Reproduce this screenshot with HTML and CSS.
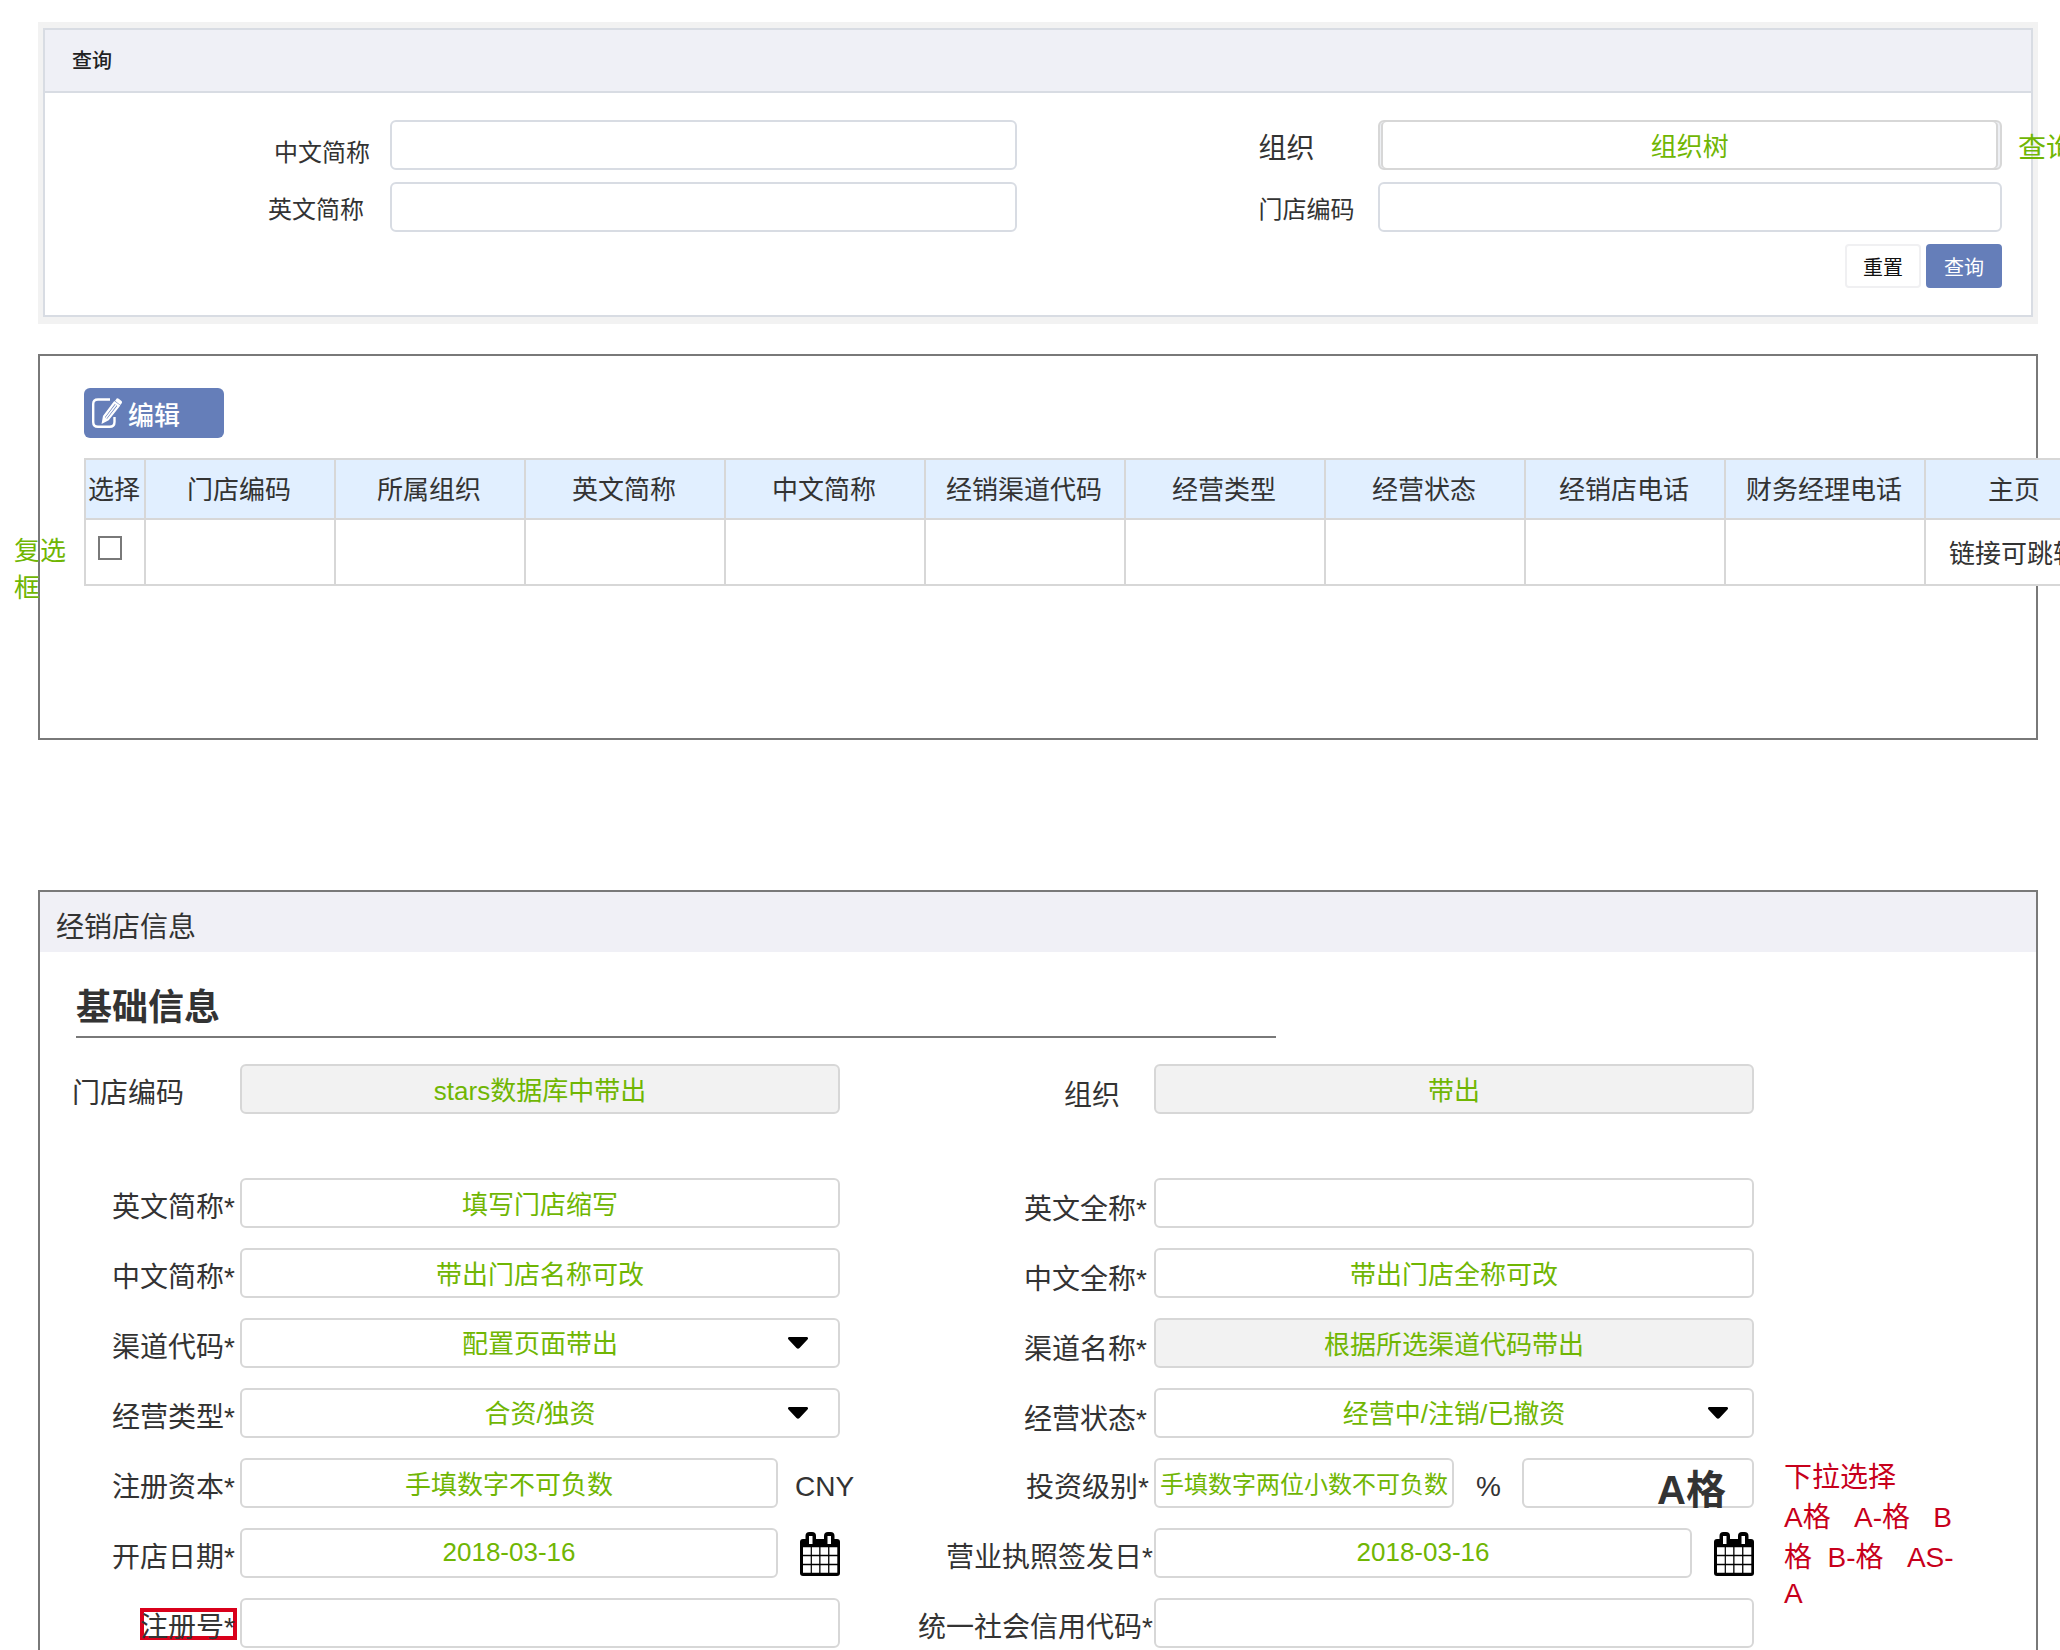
FILE: index.html
```html
<!DOCTYPE html>
<html lang="zh-CN">
<head>
<meta charset="utf-8">
<title>经销店信息</title>
<link rel="stylesheet" href="styles.css">
</head>
<body>
<svg class="defs" aria-hidden="true">
  <symbol id="calendar" viewBox="0 0 40 44">
    <path d="M3 7H37Q40 7 40 10V41Q40 44 37 44H3Q0 44 0 41V10Q0 7 3 7Z"/>
    <rect x="5.5" width="10.5" height="14" rx="4"/><rect x="24" width="10.5" height="14" rx="4"/>
    <path fill="#fff" d="M9 4h3.5v8H9zM27.5 4H31v8h-3.500zM3 15.300h7.700v7.500H3zM11.900 15.300h7.300v7.500h-7.300zM20.500 15.300h7.600v7.500h-7.600zM29.400 15.300h7.900v7.500h-7.900zM3 24.200h7.700v7.500H3zM11.900 24.200h7.300v7.500h-7.300zM20.500 24.200h7.600v7.500h-7.600zM29.400 24.200h7.900v7.500h-7.900zM3 33.200h7.700v7.500H3zM11.900 33.200h7.300v7.500h-7.300zM20.500 33.200h7.600v7.500h-7.600zM29.400 33.200h7.900v7.500h-7.900z"/>
  </symbol>
  <symbol id="caret" viewBox="0 0 20 12"><path d="M1 0H19Q21 1 19.500 2.500L11.500 11Q10 12.600 8.500 11L.5 2.500Q-1 1 1 0Z"/></symbol>
</svg>

<section class="search">
  <div class="search-box">
    <h2 class="search-title">查询</h2>
    <form class="search-form">
      <label class="search-label near" for="q-cn">中文简称</label>
      <input class="field search-field" id="q-cn" type="text">
      <label class="search-label start large" for="q-org">组织</label>
      <div class="control">
        <input class="field search-field tree" id="q-org" type="text" value="组织树">
        <span class="note side-note">查询</span>
      </div>
      <label class="search-label far" for="q-en">英文简称</label>
      <input class="field search-field" id="q-en" type="text">
      <label class="search-label start" for="q-code">门店编码</label>
      <input class="field search-field" id="q-code" type="text">
      <div class="search-actions">
        <button class="btn" type="reset">重置</button>
        <button class="btn primary" type="button">查询</button>
      </div>
    </form>
  </div>
</section>

<section class="results">
  <button class="edit" type="button">
    <svg class="edit-icon" viewBox="0 0 30 30" aria-hidden="true">
      <path d="M18 1.500H6Q1.200 1.500 1.200 6V24Q1.200 28.800 6 28.800H17.500Q22.500 28.800 22.500 24V19" fill="none" stroke="#fff" stroke-width="2.400"/>
      <path d="M22.500 4.500L12 18.500L11 24L16 21.500L26.800 7.800Z" fill="none" stroke="#fff" stroke-width="2.200"/>
      <path d="M24 7L14 20" stroke="#fff" stroke-width="1.500"/>
      <path d="M11 24L12 18.500L16 21.500Z" fill="#fff"/>
      <path d="M24 1.500Q25-.5 27 1L29.500 3Q30.500 4.200 29.500 5.500L28.300 7L23 2.800Z" fill="#fff"/>
    </svg>
    <span>编辑</span>
  </button>
  <table class="stores">
    <colgroup>
      <col class="c-pick"><col class="c-narrow"><col class="c-narrow">
      <col class="c-wide"><col class="c-wide"><col class="c-wide"><col class="c-wide"><col class="c-wide"><col class="c-wide"><col class="c-wide">
      <col class="c-home">
    </colgroup>
    <thead>
      <tr><th>选择</th><th>门店编码</th><th>所属组织</th><th>英文简称</th><th>中文简称</th><th>经销渠道代码</th><th>经营类型</th><th>经营状态</th><th>经销店电话</th><th>财务经理电话</th><th>主页</th></tr>
    </thead>
    <tbody>
      <tr><td class="pick"><input class="tick" type="checkbox" aria-label="选择"></td><td></td><td></td><td></td><td></td><td></td><td></td><td></td><td></td><td></td><td>链接可跳转</td></tr>
    </tbody>
  </table>
  <p class="note pick-note">复选框</p>
</section>

<section class="detail">
  <h2 class="detail-title">经销店信息</h2>
  <h3 class="group-title">基础信息</h3>
  <form class="detail-form">
    <label class="label first-label" for="code">门店编码</label>
    <input class="field readonly" id="code" type="text" readonly value="stars数据库中带出">
    <label class="label right org-label" for="org">组织</label>
    <input class="field readonly" id="org" type="text" readonly value="带出">
    <div class="spacer"></div>

    <label class="label" for="en">英文简称*</label>
    <input class="field" id="en" type="text" value="填写门店缩写">
    <label class="label right" for="en-full">英文全称*</label>
    <input class="field" id="en-full" type="text">

    <label class="label" for="cn">中文简称*</label>
    <input class="field" id="cn" type="text" value="带出门店名称可改">
    <label class="label right" for="cn-full">中文全称*</label>
    <input class="field" id="cn-full" type="text" value="带出门店全称可改">

    <label class="label" for="channel">渠道代码*</label>
    <div class="control">
      <select class="field choice" id="channel"><option>配置页面带出</option></select>
      <svg class="caret" aria-hidden="true"><use href="#caret"/></svg>
    </div>
    <label class="label right" for="channel-name">渠道名称*</label>
    <input class="field readonly" id="channel-name" type="text" readonly value="根据所选渠道代码带出">

    <label class="label" for="type">经营类型*</label>
    <div class="control">
      <select class="field choice" id="type"><option>合资/独资</option></select>
      <svg class="caret" aria-hidden="true"><use href="#caret"/></svg>
    </div>
    <label class="label right" for="status">经营状态*</label>
    <div class="control">
      <select class="field choice" id="status"><option>经营中/注销/已撤资</option></select>
      <svg class="caret caret-right" aria-hidden="true"><use href="#caret"/></svg>
    </div>

    <label class="label" for="capital">注册资本*</label>
    <div class="pair">
      <input class="field" id="capital" type="text" value="手填数字不可负数">
      <span class="unit">CNY</span>
    </div>
    <label class="label" for="rate">投资级别*</label>
    <div class="grade">
      <input class="field small" id="rate" type="text" value="手填数字两位小数不可负数">
      <span class="unit percent">%</span>
      <select class="field grade-select" aria-label="投资级别"><option>A格</option></select>
      <div class="grade-note">
        <p>下拉选择</p>
        <p>A格   A-格   B</p>
        <p>格  B-格   AS-</p>
        <p class="last">A</p>
      </div>
    </div>

    <label class="label" for="opened">开店日期*</label>
    <div class="pair">
      <input class="field" id="opened" type="text" value="2018-03-16">
      <button class="date-btn" type="button" aria-label="选择日期"><svg class="calendar"><use href="#calendar"/></svg></button>
    </div>
    <label class="label wide" for="issued">营业执照签发日*</label>
    <div class="pair">
      <input class="field" id="issued" type="text" value="2018-03-16">
      <button class="date-btn" type="button" aria-label="选择日期"><svg class="calendar"><use href="#calendar"/></svg></button>
    </div>

    <label class="label" for="reg"><span class="flagged">注册号*</span></label>
    <input class="field" id="reg" type="text">
    <label class="label wide" for="credit">统一社会信用代码*</label>
    <input class="field" id="credit" type="text">
  </form>
</section>
</body>
</html>
```
FILE: styles.css
```css
* {
  box-sizing: border-box;
}

html {
  overflow-x: hidden;
}

body {
  margin: 0;
  padding: 22px 22px 0 38px;
  background: #fff;
  color: #333;
  font-family: "Liberation Sans", "Noto Sans CJK SC", sans-serif;
  font-size: 26px;
  overflow: hidden;
}

h2,
h3,
p {
  margin: 0;
  font-weight: 400;
}

input,
select,
button {
  font-family: inherit;
  margin: 0;
}

.defs {
  display: none;
}

/* Shared controls */
.field {
  display: block;
  width: 100%;
  min-width: 0;
  height: 50px;
  padding: 0 4px 2px;
  border: 2px solid #d7d7d7;
  border-radius: 6px;
  background: #fff;
  color: #70b603;
  font-size: 26px;
  text-align: center;
  text-align-last: center;
  appearance: none;
  outline: none;
}

.readonly {
  background: #f2f2f2;
}

.small {
  padding: 0 0 2px;
  font-size: 24px;
}

.choice {
  padding: 2px 4px 0;
}

.control {
  position: relative;
}

.note {
  color: #70b603;
}

/* Search panel */
.search {
  padding: 6px 5px 7px;
  background: #f2f2f2;
}

.search-box {
  border: 2px solid #d8dce3;
  background: #fff;
}

.search-title {
  height: 63px;
  padding-left: 27px;
  border-bottom: 2px solid #d8dce3;
  background: #eff0f6;
  color: #222;
  font-size: 20px;
  font-weight: 500;
  line-height: 62px;
}

.search-form {
  display: grid;
  grid-template-columns: 345px 626fr 361px 624fr;
  gap: 12px 0;
  padding: 27px 29px 27px 0;
}

.search-field {
  border-color: #d8dce3;
}

.search-label {
  height: 50px;
  padding-top: 8px;
  font-size: 24px;
  line-height: 40px;
}

.near {
  padding-top: 13px;
  padding-right: 20px;
  text-align: right;
}

.far {
  padding-right: 26px;
  text-align: right;
}

.start {
  padding-left: 242px;
}

.large {
  padding-top: 9px;
  font-size: 28px;
}

.tree {
  border-color: #d7d7d7;
  box-shadow: inset 1px 0 #eef0f4, inset -2px 0 #eef0f4, inset 3px 0 #d7d7d7, inset -4px 0 #d7d7d7;
}

.side-note {
  position: absolute;
  top: 9px;
  left: calc(100% + 16px);
  font-size: 28px;
  line-height: 40px;
  white-space: nowrap;
}

.search-actions {
  grid-column: 1 / -1;
  display: flex;
  justify-content: flex-end;
  gap: 5px;
}

.btn {
  width: 76px;
  height: 44px;
  padding: 0;
  border: 2px solid #f0f0f2;
  border-radius: 4px;
  background: #fff;
  color: #111;
  font-size: 20px;
}

.primary {
  border-color: #657eb9;
  background: #657eb9;
  color: #fff;
}

/* Result list */
.results {
  position: relative;
  min-height: 386px;
  margin-top: 30px;
  padding: 32px 44px;
  border: 2px solid #797979;
}

.edit {
  display: flex;
  align-items: center;
  gap: 6px;
  width: 140px;
  height: 50px;
  padding: 0 8px;
  border: 0;
  border-radius: 6px;
  background: #657eb9;
  color: #fff;
  font-size: 26px;
  font-weight: 500;
}

.edit-icon {
  width: 30px;
  height: 30px;
}

.stores {
  position: relative;
  width: 2022px;
  margin-top: 20px;
  border-collapse: collapse;
  table-layout: fixed;
  background: #fff;
}

.c-pick { width: 60px; }
.c-narrow { width: 190px; }
.c-wide { width: 200px; }
.c-home { width: 180px; }

.stores th,
.stores td {
  padding: 0 2px 2px 0;
  border: 2px solid #d7d7d7;
  font-weight: 400;
  text-align: center;
  white-space: nowrap;
}

.stores th {
  height: 60px;
  padding-bottom: 4px;
  background: #e1efff;
}

.stores td {
  height: 66px;
}

.stores .pick {
  padding: 0 0 8px 12px;
  text-align: left;
}

.tick {
  display: block;
  width: 24px;
  height: 24px;
  border: 2px solid #797979;
  background: #fff;
  appearance: none;
}

.pick-note {
  position: absolute;
  top: 177px;
  left: -26px;
  width: 54px;
  line-height: 37px;
}

/* Store detail */
.detail {
  margin-top: 150px;
  border: 2px solid #797979;
  border-bottom: 0;
}

.detail-title {
  height: 60px;
  padding-left: 16px;
  background: #f0f0f6;
  font-size: 28px;
  line-height: 71px;
}

.group-title {
  width: 1200px;
  max-width: 100%;
  height: 86px;
  margin-left: 36px;
  padding-top: 28px;
  border-bottom: 2px solid #797979;
  font-size: 36px;
  font-weight: 700;
  line-height: 56px;
}

.detail-form {
  display: grid;
  grid-template-columns: 200px 600fr 314px 600fr;
  gap: 20px 0;
  padding: 26px 282px 2px 0;
}

.spacer {
  grid-column: 1 / -1;
  height: 24px;
}

.label {
  height: 50px;
  padding: 10px 5px 0 0;
  font-size: 28px;
  line-height: 40px;
  text-align: right;
  white-space: nowrap;
}

.right {
  padding-top: 12px;
  padding-right: 7px;
}

.wide {
  padding-right: 1px;
}

.first-label {
  padding-right: 56px;
}

.org-label {
  padding-right: 34px;
}

.caret {
  position: absolute;
  top: 19px;
  right: 32px;
  width: 20px;
  height: 12px;
  fill: #000;
  pointer-events: none;
}

.caret-right {
  right: 26px;
}

.pair {
  display: grid;
  grid-template-columns: 1fr 62px;
}

.unit {
  padding: 9px 0 0 17px;
  font-size: 28px;
  line-height: 40px;
}

.date-btn {
  justify-self: end;
  width: 40px;
  height: 44px;
  margin-top: 4px;
  padding: 0;
  border: 0;
  background: none;
}

.calendar {
  display: block;
  width: 40px;
  height: 44px;
}

.grade {
  position: relative;
  display: grid;
  grid-template-columns: 300fr 68px 232fr;
}

.percent {
  padding-left: 22px;
}

.grade-select {
  padding: 10px 28px 0 0;
  border: 0;
  box-shadow: inset 0 0 0 2px #d7d7d7;
  color: #333;
  font-size: 40px;
  font-weight: 700;
  text-align: right;
  text-align-last: right;
}

.grade-note {
  position: absolute;
  top: 0;
  left: calc(100% + 30px);
  color: #c7001b;
  font-size: 28px;
  line-height: 40px;
}

.grade-note p {
  white-space: pre;
}

.grade-note .last {
  line-height: 32px;
}

.flagged {
  position: relative;
  display: inline-block;
}

.flagged::before {
  content: "";
  position: absolute;
  inset: 0 -2px 8px 0;
  z-index: -1;
  border: 4px solid #d9001b;
}
```
